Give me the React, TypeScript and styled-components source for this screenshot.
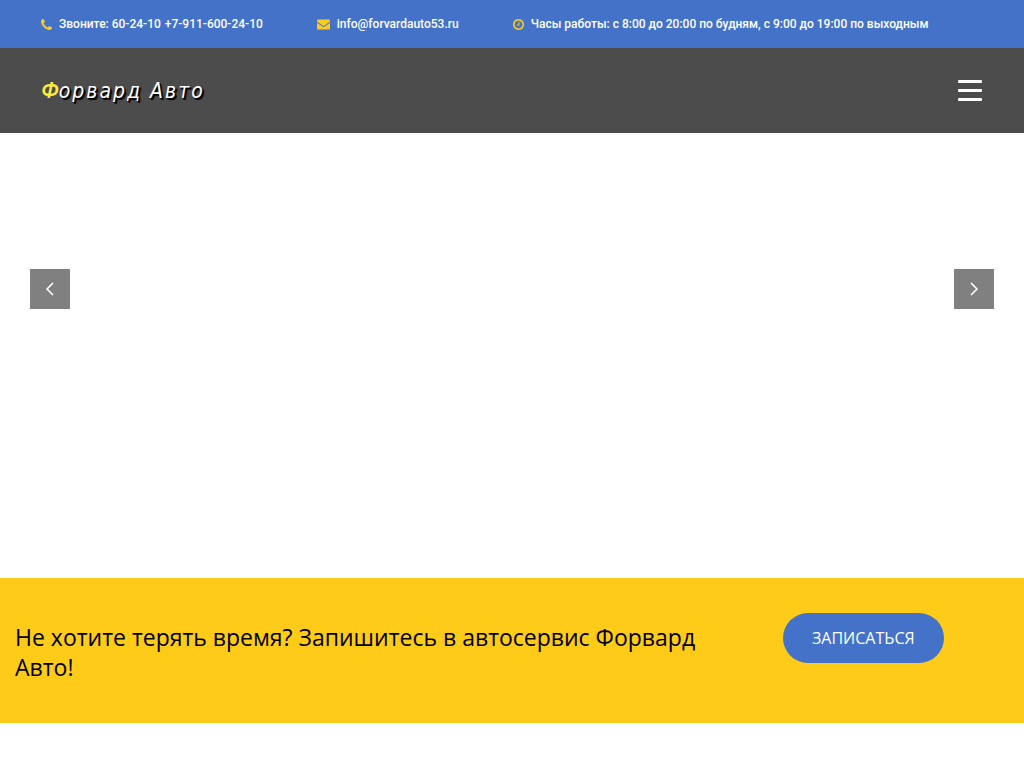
import React from "react";
import styled, { createGlobalStyle } from "styled-components";

const GlobalStyle = createGlobalStyle`
  *, *::before, *::after { box-sizing: border-box; }
  body {
    margin: 0;
    background: #fff;
    color: #000;
    font-family: "Open Sans", "Noto Sans", sans-serif;
  }
`;

const TopBar = styled.address`
  display: flex;
  align-items: center;
  gap: 54px;
  min-height: 48px;
  padding: 0 41px;
  background: #4472c8;
  color: #fff;
  font-family: Roboto, sans-serif;
  font-style: normal;
  font-size: 12px;
  font-weight: 500;
  line-height: 16px;
  white-space: nowrap;
`;

const Contact = styled.div`
  display: flex;
  align-items: center;
  gap: 7px;

  a {
    color: inherit;
    text-decoration: none;
  }
`;

const Phones = styled.span`
  display: flex;
  gap: 4px;
`;

const ContactIcon = styled.svg`
  flex: none;
  fill: #fecc18;
`;

const Header = styled.header`
  display: flex;
  align-items: center;
  justify-content: space-between;
  min-height: 85px;
  padding: 0 42px 0 41px;
  background: #4c4c4c;
`;

const Logo = styled.a`
  color: #fff;
  font-family: "DejaVu Sans Condensed", "DejaVu Sans", sans-serif;
  font-size: 21px;
  font-style: italic;
  line-height: 28px;
  letter-spacing: 2px;
  text-decoration: none;
  text-shadow: 1px 1px 1px #000, 2px 2px 1px #000;
`;

const LogoInitial = styled.span`
  color: #ffeb3b;
  font-family: "Noto Sans", sans-serif;
  font-weight: 600;
  letter-spacing: 0;
  text-shadow: none;
`;

const MenuButton = styled.button`
  display: flex;
  flex-direction: column;
  gap: 6px;
  padding: 0;
  border: 0;
  background: none;
  cursor: pointer;
`;

const MenuLine = styled.span`
  width: 24px;
  height: 3px;
  border-radius: 1px;
  background: #fff;
`;

const Slider = styled.section`
  display: flex;
  align-items: flex-start;
  justify-content: space-between;
  min-height: 445px;
  padding: 136px 30px;
`;

const ArrowButton = styled.button`
  display: flex;
  align-items: center;
  justify-content: center;
  width: 40px;
  height: 40px;
  padding: 0;
  border: 0;
  background: #808080;
  cursor: pointer;

  svg {
    fill: none;
    stroke: #fff;
    stroke-width: 1.6;
  }
`;

const Callout = styled.section`
  display: grid;
  grid-template-columns: 3fr 1fr;
  align-items: start;
  min-height: 145px;
  padding: 35px 0;
  background: #fecb18;
`;

const CalloutTitle = styled.h2`
  margin: 0;
  padding: 9px 15px 0;
  font-size: 23px;
  font-weight: 400;
  line-height: 30px;
`;

const BookButton = styled.button`
  justify-self: start;
  height: 50px;
  margin-left: 15px;
  padding: 0 29px;
  border: 0;
  border-radius: 25px;
  background: #4472c8;
  color: #fff;
  font-family: inherit;
  font-size: 16px;
  line-height: 20px;
  white-space: nowrap;
  cursor: pointer;
`;

export default function App() {
  return (
    <>
      <GlobalStyle />
      <TopBar>
        <Contact>
          <ContactIcon width="11" height="11" viewBox="0 0 1408 1408" aria-hidden="true">
            <path d="M1408 1112q0 27-10 70.5t-21 68.5q-21 50-122 106-94 51-186 51-27 0-53-3.5t-57-12.5-47-14.5-55.5-20.5-49.5-18q-98-35-175-83-127-79-264-216t-216-264q-48-77-83-175-3-9-18-49.5t-20.5-55.5-14.5-47-12.5-57-3.5-53q0-92 51-186 56-101 106-122 25-11 68.5-21t70.5-10q14 0 21 3 18 6 53 76 11 19 30 54t35 63.5 31 53.5q3 4 17.5 25t21.5 35.5 7 28.5q0 20-28.5 50t-62 55-62 53-28.5 46q0 9 5 22.5t8.5 20.5 14 24 11.5 19q76 137 174 235t235 174q2 1 19 11.5t24 14 20.5 8.5 22.5 5q18 0 46-28.5t53-62 55-62 50-28.5q14 0 28.5 7t35.5 21.5 25 17.5q25 15 53.5 31t63.5 35 54 30q70 35 76 53 3 7 3 21z" />
          </ContactIcon>
          <Phones>
            <span>Звоните: 60-24-10</span>
            <a href="tel:+79116002410">+7-911-600-24-10</a>
          </Phones>
        </Contact>
        <Contact>
          <ContactIcon width="13" height="11" viewBox="0 256 1792 1408" aria-hidden="true">
            <path d="M1792 710v794q0 66-47 113t-113 47h-1472q-66 0-113-47t-47-113v-794q44 49 101 87 362 246 497 345 57 42 92.5 65.5t94.5 48 110 24.5h2q51 0 110-24.5t94.5-48 92.5-65.5q170-123 498-345 57-39 100-87zm0-294q0 79-49 151t-122 123q-376 261-468 325-10 7-42.5 31t-54 38.5-52 32.5-57.5 27-50 9h-2q-23 0-50-9t-57.5-27-52-32.5-54-38.5-42.5-31q-91-64-262-182.5t-205-142.5q-62-42-117-115.5t-55-136.5q0-78 41.5-130t118.5-52h1472q65 0 112.5 47t47.5 113z" />
          </ContactIcon>
          <a href="mailto:info@forvardauto53.ru">info@forvardauto53.ru</a>
        </Contact>
        <Contact>
          <ContactIcon width="11" height="11" viewBox="128 128 1536 1536" aria-hidden="true">
            <path d="M1024 544v448q0 14-9 23t-23 9h-320q-14 0-23-9t-9-23v-64q0-14 9-23t23-9h224v-352q0-14 9-23t23-9h64q14 0 23 9t9 23zm416 352q0-148-73-273t-198-198-273-73-273 73-198 198-73 273 73 273 198 198 273 73 273-73 198-198 73-273zm224 0q0 209-103 385.5t-279.5 279.5-385.5 103-385.5-103-279.5-279.5-103-385.5 103-385.5 279.5-279.5 385.5-103 385.5 103 279.5 279.5 103 385.5z" />
          </ContactIcon>
          <span>Часы работы: с 8:00 до 20:00 по будням, с 9:00 до 19:00 по выходным</span>
        </Contact>
      </TopBar>
      <Header>
        <Logo href="#">
          <LogoInitial>Ф</LogoInitial>орвард Авто
        </Logo>
        <MenuButton type="button" aria-label="Меню">
          <MenuLine />
          <MenuLine />
          <MenuLine />
        </MenuButton>
      </Header>
      <main>
        <Slider aria-label="Слайдер">
          <ArrowButton type="button" aria-label="Назад">
            <svg width="10" height="14" viewBox="0 0 10 14" aria-hidden="true">
              <path d="M8 1L2 7l6 6" />
            </svg>
          </ArrowButton>
          <ArrowButton type="button" aria-label="Вперёд">
            <svg width="10" height="14" viewBox="0 0 10 14" aria-hidden="true">
              <path d="M2 1l6 6-6 6" />
            </svg>
          </ArrowButton>
        </Slider>
        <Callout>
          <CalloutTitle>Не хотите терять время? Запишитесь в автосервис Форвард Авто!</CalloutTitle>
          <BookButton type="button">ЗАПИСАТЬСЯ</BookButton>
        </Callout>
      </main>
    </>
  );
}
